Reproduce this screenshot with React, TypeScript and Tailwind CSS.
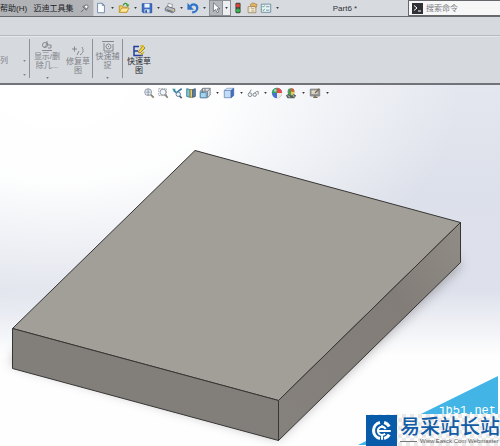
import React from "react";

type IconName =
  | "new" | "open" | "save" | "print" | "undo" | "cursor" | "rebuild" | "props" | "options"
  | "zoomFit" | "zoomArea" | "previous" | "section" | "view" | "display" | "glasses"
  | "appearance" | "scene" | "monitor";

const drawings: Record<IconName, React.ReactNode> = {
  new: (
    <>
      <path d="M3 1.500h5.500l2.500 2.500v8.500H3z" fill="#fbfdff" stroke="#6480a8" />
      <path d="M8.500 1.500v2.500H11" fill="none" stroke="#6480a8" />
    </>
  ),
  open: (
    <>
      <path d="M1.500 12V4.500h3.500l1 1.500h4.500V12z" fill="#f1cf62" stroke="#bd9231" />
      <path d="M1.500 12l3-5h8.500l-3 5z" fill="#ffe896" stroke="#bd9231" />
      <path d="M6 4c1-3 4-3 5-1" fill="none" stroke="#389a32" strokeWidth="1.500" />
      <path d="M9 3h4.200L11.500 6z" fill="#389a32" />
    </>
  ),
  save: (
    <>
      <path d="M1.500 2h11v10.500h-10l-1-1z" fill="#3c6ec5" stroke="#2450a0" />
      <path d="M4 2h6v4.500H4z" fill="#eef4ff" />
      <path d="M4 8.500h6v4H4z" fill="#d4dff1" />
      <path d="M5 9.500h2v3H5z" fill="#2450a0" />
    </>
  ),
  print: (
    <>
      <path d="M4 6l1-4.500 5 1.500-1 4z" fill="#fff" stroke="#888d96" />
      <path d="M1.500 7l2.500-2 8.500 3v3l-2.500 1.500L1.500 10z" fill="#b8bcc5" stroke="#626773" />
      <path d="M3 9l7 2.200" stroke="#4c515b" />
      <circle cx="11" cy="9.500" r="1" fill="#efc643" />
    </>
  ),
  undo: (
    <>
      <path d="M4 5c3-4 8-2 8 2 0 3-3 5-6 5" fill="none" stroke="#2d74c8" strokeWidth="2.600" />
      <path d="M.5 1v8H8z" fill="#2d74c8" />
    </>
  ),
  cursor: <path d="M4 1v10l2.500-2.300L8.300 12.500l1.700-.8L8.200 8h3.300z" fill="#fff" stroke="#555a62" strokeWidth=".8" />,
  rebuild: (
    <>
      <rect x="4" y="1" width="6" height="12" rx="1.500" fill="#3b4a40" />
      <circle cx="7" cy="4" r="2.300" fill="#e33f32" />
      <circle cx="7" cy="10" r="2.300" fill="#35b64b" />
    </>
  ),
  props: (
    <>
      <path d="M2.500 5.500h9v7h-9z" fill="#fffbed" stroke="#9c8458" />
      <path d="M4 8h1m1 0h4M4 10.500h1m1 0h4" stroke="#9c8458" />
      <path d="M5 3l3-2 5 2-1 3-4-1-2 1z" fill="#e1b566" stroke="#97743a" strokeWidth=".7" />
    </>
  ),
  options: (
    <>
      <path d="M1.500 2.500h11v9.500h-11z" fill="#e9f4f6" stroke="#638497" />
      <path d="M3 5l1 1 1.500-2M3 9l1 1 1.500-2" fill="none" stroke="#3c9160" />
      <path d="M7 5.500h4M7 9.500h4" stroke="#6687a0" />
    </>
  ),
  zoomFit: (
    <>
      <circle cx="6" cy="6" r="4" fill="#f2f7fc" stroke="#858c96" />
      <path d="M6 3v6M3 6h6M5 4l1-1 1 1M5 8l1 1 1-1" fill="none" stroke="#6c8098" strokeWidth=".8" />
      <path d="M9 9l3.500 3.500" stroke="#8d7f70" strokeWidth="2" />
    </>
  ),
  zoomArea: (
    <>
      <path d="M2 2h9v8H2z" fill="none" stroke="#9a9fa6" strokeDasharray="2 1" />
      <circle cx="7" cy="6" r="3.500" fill="#f2f7fc" stroke="#858c96" />
      <path d="M9.500 9l3 3.500" stroke="#8d7f70" strokeWidth="2" />
    </>
  ),
  previous: (
    <>
      <path d="M1 2l4 0 0 4z" fill="#3ba09d" />
      <path d="M3 4l6 5M7 6l5.500-4" fill="none" stroke="#3d81a6" strokeWidth="2" />
      <circle cx="8.500" cy="8.500" r="2.600" fill="#eaf2f7" stroke="#4b7996" />
      <path d="M10 10.500l2.500 2.500" stroke="#555f6b" strokeWidth="2" />
    </>
  ),
  section: (
    <>
      <path d="M2 2l4 1v9l-4-1z" fill="#7fc7d0" stroke="#34798b" />
      <path d="M6 3h3v9H6z" fill="#efce70" stroke="#91793a" />
      <path d="M9 3l3-1v9l-3 1z" fill="#5c84ad" stroke="#3d5877" />
    </>
  ),
  view: (
    <>
      <path d="M1.500 5l3-3.500h8.500v8l-3 3H1.500z" fill="#dfe5ea" stroke="#6d747b" />
      <path d="M4 1.500v8M2 5h8v7M10 5l3-3M7 1.500V5" fill="none" stroke="#6d747b" />
      <path d="M1.500 6.500h7v6h-7z" fill="#a6d4ee" stroke="#4d87ad" />
    </>
  ),
  display: (
    <>
      <path d="M1.500 4l3-2.500h8l-3 2.500z" fill="#e8f2ff" stroke="#6f8fc0" strokeWidth=".8" />
      <path d="M1.500 4h8v8.500h-8z" fill="#c3dcf8" stroke="#6f8fc0" />
      <path d="M9.500 4l3-2.500V10l-3 2.500z" fill="#3f6fbe" stroke="#3a61a4" strokeWidth=".8" />
    </>
  ),
  glasses: (
    <g fill="#eff1f4" stroke="#777e88">
      <path d="M2 8L5 3M8 9c1-2 2-4 5-4v4" fill="none" />
      <circle cx="3.500" cy="9" r="2.200" />
      <circle cx="9" cy="9" r="2" />
    </g>
  ),
  appearance: (
    <>
      <circle cx="7" cy="7" r="6" fill="#4574cc" />
      <path d="M7 7V1A6 6 0 0 0 1 7z" fill="#35a864" />
      <path d="M7 7V1A6 6 0 0 1 13 7z" fill="#e94c46" />
      <path d="M7 7h6A6 6 0 0 1 7 13z" fill="#eee8df" />
      <circle cx="5" cy="4" r="1.500" fill="#fff" opacity=".6" />
    </>
  ),
  scene: (
    <>
      <path d="M1 10l3-2h6l3 2-2 3H3z" fill="#53606b" />
      <path d="M3 10l3 2m3-3 2 3" stroke="#dfdf91" />
      <circle cx="7" cy="5.500" r="4" fill="#4c9b59" />
      <path d="M7 5.500v-4a4 4 0 0 1 4 4z" fill="#e2573c" />
      <path d="M7 5.500h4a4 4 0 0 1-4 4z" fill="#e9c851" />
    </>
  ),
  monitor: (
    <>
      <path d="M1.500 2.500h11v8h-11z" fill="#96999b" stroke="#7b7e80" />
      <path d="M3 4h7v4H3z" fill="#e3dac8" />
      <path d="M5 12h5M7 10v2M7 7l5-5" stroke="#77664a" strokeWidth="1.500" />
    </>
  ),
};

function Icon({ name, className = "size-3" }: { name: IconName; className?: string }) {
  return <svg viewBox="0 0 14 14" className={className} aria-hidden="true">{drawings[name]}</svg>;
}

function Caret({ className = "text-[#363a40]" }: { className?: string }) {
  return (
    <svg viewBox="0 0 4 3" className={`h-[2px] w-[3px] shrink-0 ${className}`} aria-hidden="true">
      <path d="M0 0h4L2 3z" fill="currentColor" />
    </svg>
  );
}

function Tool({ name, label, menu = false, caretWidth = "w-[9px]" }: {
  name: IconName; label: string; menu?: boolean; caretWidth?: string;
}) {
  return (
    <div className="flex h-full shrink-0">
      <button aria-label={label} className="flex w-[14px] items-center justify-center"><Icon name={name} /></button>
      {menu && (
        <button aria-label={`${label} 菜单`} className={`flex items-center justify-center ${caretWidth}`}><Caret /></button>
      )}
    </div>
  );
}

function Command({ lines, icon, width, enabled = false, menu = false }: {
  lines: string[]; icon: React.ReactNode; width: string; enabled?: boolean; menu?: boolean;
}) {
  return (
    <button disabled={!enabled} className={`flex shrink-0 flex-col items-center ${width} ${menu ? "pt-[2px]" : "pt-[7px]"} ${enabled ? "text-[#24272c]" : "text-[#7f8287]"}`}>
      <svg viewBox="0 0 12 12" className="size-3 shrink-0" aria-hidden="true">{icon}</svg>
      {lines.map((line) => <span key={line} className="block whitespace-nowrap leading-[9px]">{line}</span>)}
      {menu && <Caret className="mt-[7px] text-[#777b80]" />}
    </button>
  );
}

function Divider() {
  return <div className="my-px w-px shrink-0 bg-[#8f9196]" />;
}

function TitleBar() {
  return (
    <header className="flex h-[17px] border-b border-[#686a6f] bg-[#d7dade]">
      <nav className="flex w-[94px] shrink-0 items-center justify-between border-r border-[#c7c9cd] bg-[#b0b2b6] pr-1 text-[#202226]">
        <button className="whitespace-nowrap">帮助(H)</button>
        <button className="whitespace-nowrap">迈迪工具集</button>
        <button aria-label="固定菜单">
          <svg viewBox="0 0 10 10" className="size-[9px]" aria-hidden="true">
            <path d="M1 9l3-3M3 3l4 4 1-2-3-3z" fill="#eee" stroke="#63666c" />
            <circle cx="7" cy="3" r="2" fill="#fff" stroke="#63666c" />
          </svg>
        </button>
      </nav>
      <div className="flex shrink-0">
        <Tool name="new" label="新建" menu />
        <Tool name="open" label="打开" menu />
        <Tool name="save" label="保存" menu />
        <Tool name="print" label="打印" menu />
        <Tool name="undo" label="撤消" menu />
        <div className="flex border border-[#8d9095] bg-[#eceef0]">
          <button aria-label="选择" className="flex w-[13px] items-center justify-center border-r border-[#8d9095] bg-[#b4b7bb]"><Icon name="cursor" /></button>
          <button aria-label="选择 菜单" className="flex w-[7px] items-center justify-center"><Caret /></button>
        </div>
        <Tool name="rebuild" label="重建模型" />
        <Tool name="props" label="文件属性" />
        <Tool name="options" label="选项" menu />
      </div>
      <h1 className="flex grow items-center justify-center text-[#303338]">Part6 *</h1>
      <label className="flex w-[92px] shrink-0 items-center border border-r-0 border-[#65676b] bg-[#f7f7f8] pl-[3px]">
        <svg viewBox="0 0 11 11" className="size-[11px] shrink-0" aria-hidden="true">
          <path d="M0 0h11v11H0z" fill="#303136" />
          <path d="M2 2.500l3 2.500-3 2.500M6 8h3" fill="none" stroke="#fff" />
        </svg>
        <input aria-label="搜索命令" placeholder="搜索命令" className="w-full min-w-0 bg-transparent pl-[3px] outline-none placeholder:text-[#777a80]" />
      </label>
    </header>
  );
}

function Ribbon() {
  return (
    <section className="border-b-2 border-[#717378] bg-[#d6d9de]">
      <div className="h-[19px] border-b border-[#b7babf]" />
      <div className="flex h-[47px] border-t border-[#e5e7e9] pt-px pb-1">
        <button disabled className="flex w-[29px] shrink-0 justify-between pt-[18px] pr-[3px] text-[#7f8287]">
          <span>列</span>
          <span className="flex flex-col gap-3 pt-1"><Caret className="text-[#85888d]" /><Caret className="text-[#85888d]" /></span>
        </button>
        <Divider />
        <Command width="w-[34px]" menu lines={["显示/删", "除几..."]} icon={
          <g fill="none" stroke="#85888d"><circle cx="4" cy="5" r="2.500" /><path d="M6 1v4m-3 3 4-5m0 2h3v3H7M1 10.500h10" /></g>
        } />
        <Command width="w-[28px]" lines={["修复草", "图"]} icon={
          <path d="M0 4h5M2.500 1.500v5M5 10l2-4m1 4c3-2 4-4 2-8" fill="none" stroke="#85888d" />
        } />
        <Divider />
        <Command width="w-[29px]" menu lines={["快速捕", "捉"]} icon={
          <g fill="none" stroke="#85888d"><path d="M0 1.500h12M2 3v8h9V4" /><circle cx="6.500" cy="6.500" r="2.500" /><path d="M6 6.500h1" /></g>
        } />
        <Divider />
        <Command width="w-[32px]" enabled lines={["快速草", "图"]} icon={
          <><path d="M6 1.500H1v9h8V8M1 6h4" fill="none" stroke="#263f9a" strokeWidth="1.500" /><path d="M5 7l5-6 2 2-5 5z" fill="#f6d536" stroke="#8e7123" strokeWidth=".8" /><path d="M7 1h4M8 10l3-3" stroke="#d9b51c" strokeWidth="1.500" /></>
        } />
      </div>
    </section>
  );
}

function Model() {
  return (
    <svg viewBox="0 0 500 361" className="block w-full" role="img" aria-label="长方体模型">
      <defs>
        <linearGradient id="sky" x1="0" y1="0" x2="0" y2="1">
          <stop offset="0" stopColor="#e4e7ef" />
          <stop offset=".3" stopColor="#dce0ea" />
          <stop offset=".57" stopColor="#dee1eb" />
          <stop offset=".66" stopColor="#eef0f5" />
          <stop offset=".75" stopColor="#fefefe" />
          <stop offset="1" stopColor="#fefefe" />
        </linearGradient>
        <radialGradient id="light" gradientUnits="userSpaceOnUse" cx="60" cy="20" r="400" gradientTransform="scale(1 .55)">
          <stop offset="0" stopColor="#fff" />
          <stop offset=".4" stopColor="#fff" stopOpacity=".95" />
          <stop offset=".75" stopColor="#fff" stopOpacity=".4" />
          <stop offset="1" stopColor="#fff" stopOpacity="0" />
        </radialGradient>
        <linearGradient id="side" x1="1" y1="0" x2="0" y2="1">
          <stop stopColor="#918d86" /><stop offset=".35" stopColor="#827d78" /><stop offset="1" stopColor="#85817c" />
        </linearGradient>
        <filter id="soft" x="-10%" y="-10%" width="120%" height="120%"><feGaussianBlur stdDeviation="6" /></filter>
      </defs>
      <path d="M0 0h500v361H0z" fill="url(#sky)" />
      <path d="M0 0h500v361H0z" fill="url(#light)" />
      <path d="M10 278L278 353 461 181 440 150 30 250z" fill="#777578" opacity=".6" filter="url(#soft)" />
      <g stroke="#373635" strokeLinejoin="round">
        <path d="M195 65.500L460.500 137.500 278.500 315.500 12.500 243.500z" fill="#a29f99" />
        <path d="M12.500 243.500l266 72v40l-266-72z" fill="#827f7b" />
        <path d="M278.500 315.500l182-178v40l-182 178z" fill="url(#side)" />
      </g>
      <path d="M498 291v69H358z" fill="#42b5e6" />
    </svg>
  );
}

function Watermark() {
  return (
    <div className="absolute right-0 bottom-0 w-[134px]">
      <p className="h-2 overflow-hidden pr-1 text-right font-['Liberation_Mono',monospace] text-[12px] leading-[10px] text-white">jb51.net</p>
      <div className="flex h-8 items-center bg-[#fafafa] bg-[conic-gradient(#e9e9e9_25%,#fcfcfc_0_50%,#e9e9e9_0_75%,#fcfcfc_0)] bg-size-[8px_8px]">
        <svg viewBox="0 0 30 30" className="size-[31px] shrink-0" aria-label="易采站长站标志" role="img">
          <path d="M0 0h30v30H0z" fill="#075ba8" />
          <g fill="none" stroke="#fff">
            <path d="M13.500 7.200a8 8 0 0 0 0 15.600M17.500 7.200a8 8 0 0 1 5 4M22.500 19a8 8 0 0 1-5 3.800" strokeWidth="3" />
            <path d="M15.500 10v2.500M15.500 19v5M12 15.500h12M19 13.500a4 4 0 1 0-.5 4.500" strokeWidth="2" />
          </g>
        </svg>
        <div className="ml-[3px] shrink-0">
          <p className="font-['Noto_Sans_CJK_SC',sans-serif] text-[20px] leading-[22px] font-medium whitespace-nowrap text-[#125ca6]">易采站长站</p>
          <div className="flex items-center gap-[3px]">
            <span className="h-px w-[17px] bg-[#777]" />
            <span className="font-['Liberation_Sans',sans-serif] text-[6px] leading-[8px] whitespace-nowrap text-[#555]">Www.Easck.Com Webmaster</span>
          </div>
        </div>
      </div>
    </div>
  );
}

export default function App() {
  return (
    <div className="flex min-h-screen flex-col overflow-hidden bg-white font-['Liberation_Sans','Noto_Sans_CJK_SC',sans-serif] text-[8px] leading-[9px]">
      <TitleBar />
      <Ribbon />
      <main className="relative grow">
        <Model />
        <div role="toolbar" aria-label="视图工具" className="absolute inset-x-0 top-0 flex h-4 pl-[142px]">
          <Tool name="zoomFit" label="整屏显示全图" />
          <Tool name="zoomArea" label="局部放大" />
          <Tool name="previous" label="上一视图" />
          <Tool name="section" label="剖面视图" />
          <Tool name="view" label="视图定向" menu caretWidth="w-[10px]" />
          <Tool name="display" label="显示样式" menu caretWidth="w-[10px]" />
          <Tool name="glasses" label="隐藏/显示项目" menu caretWidth="w-[10px]" />
          <Tool name="appearance" label="编辑外观" />
          <Tool name="scene" label="应用布景" menu caretWidth="w-[10px]" />
          <Tool name="monitor" label="视图设定" menu caretWidth="w-[10px]" />
        </div>
        <Watermark />
      </main>
    </div>
  );
}
